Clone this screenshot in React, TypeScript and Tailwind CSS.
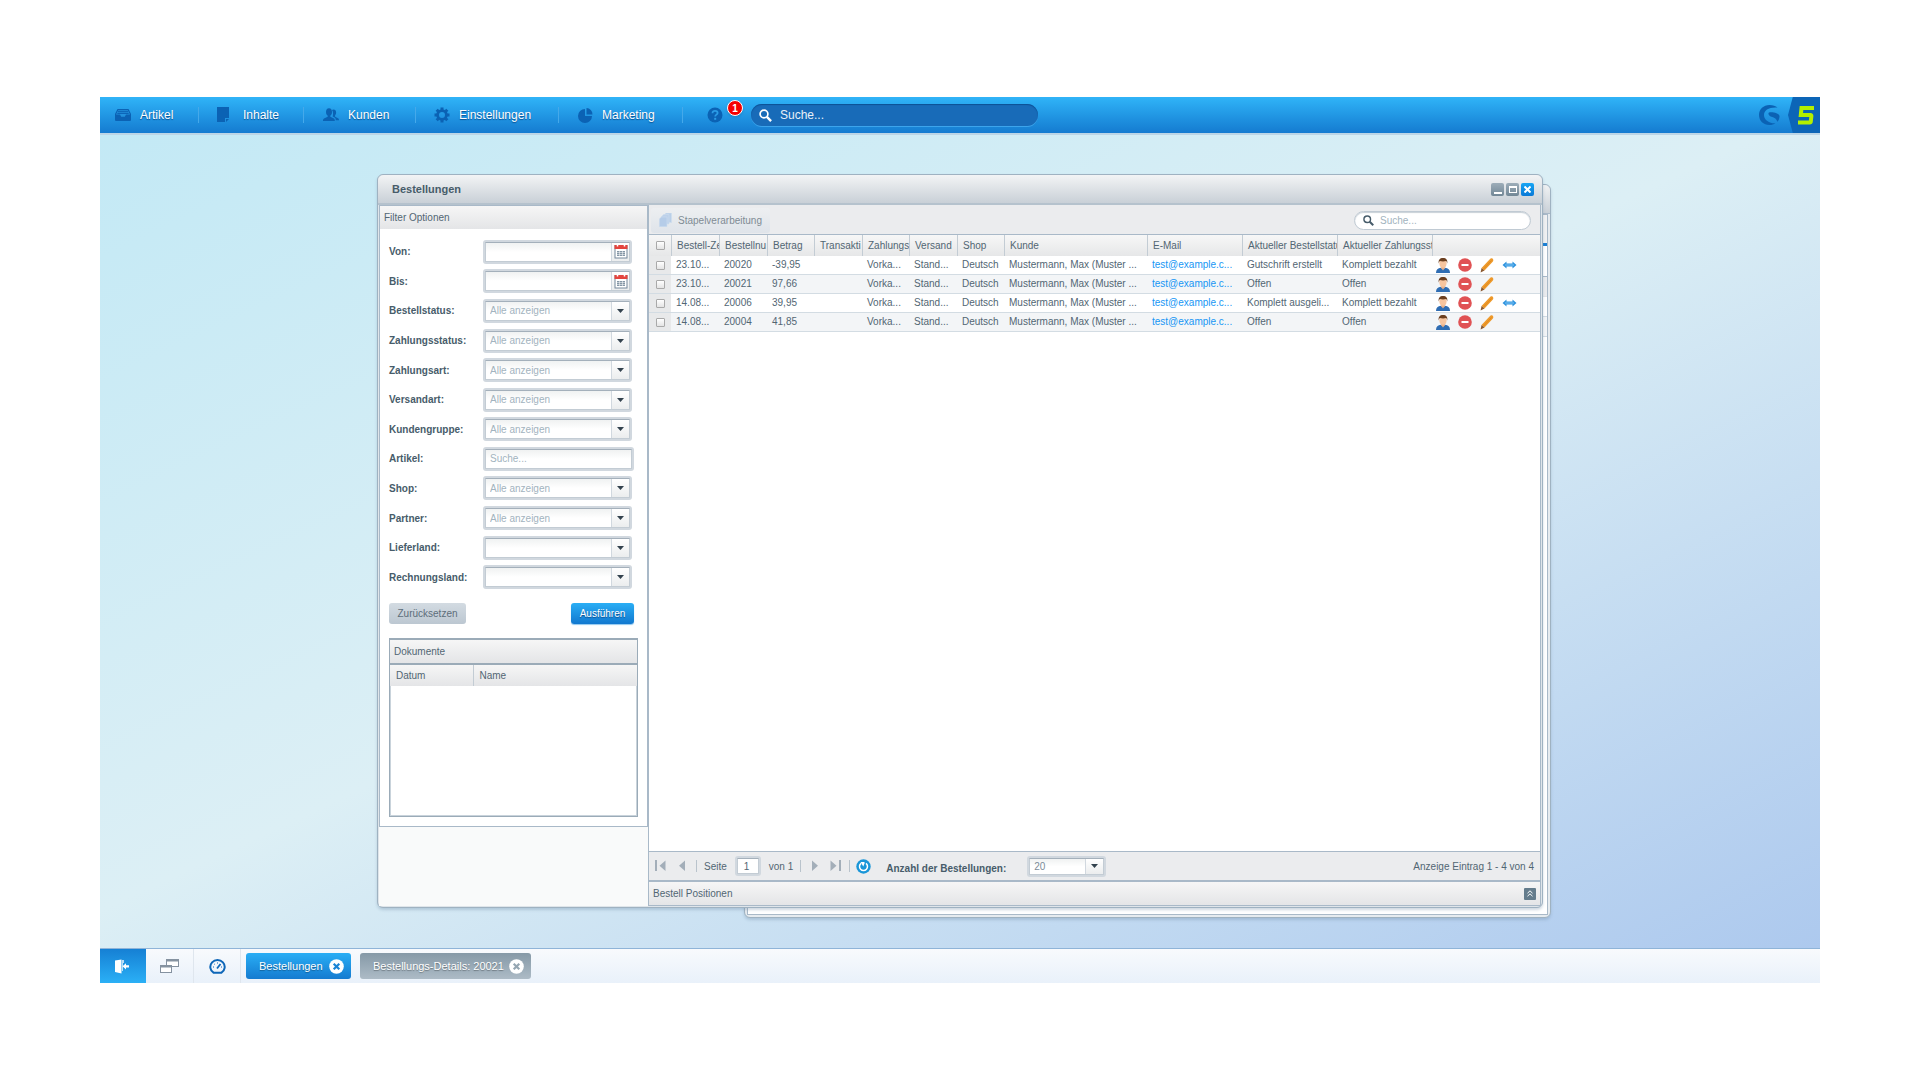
import React from "react";

const FIELDS: { label: string; kind: "date" | "select" | "text"; value: string }[] = [
  { label: "Von:", kind: "date", value: "" },
  { label: "Bis:", kind: "date", value: "" },
  { label: "Bestellstatus:", kind: "select", value: "Alle anzeigen" },
  { label: "Zahlungsstatus:", kind: "select", value: "Alle anzeigen" },
  { label: "Zahlungsart:", kind: "select", value: "Alle anzeigen" },
  { label: "Versandart:", kind: "select", value: "Alle anzeigen" },
  { label: "Kundengruppe:", kind: "select", value: "Alle anzeigen" },
  { label: "Artikel:", kind: "text", value: "Suche..." },
  { label: "Shop:", kind: "select", value: "Alle anzeigen" },
  { label: "Partner:", kind: "select", value: "Alle anzeigen" },
  { label: "Lieferland:", kind: "select", value: "" },
  { label: "Rechnungsland:", kind: "select", value: "" },
];

const COLUMNS = [
  "Bestell-Ze",
  "Bestellnu",
  "Betrag",
  "Transakti",
  "Zahlungs",
  "Versand",
  "Shop",
  "Kunde",
  "E-Mail",
  "Aktueller Bestellstatu",
  "Aktueller Zahlungsst",
];

const ORDERS = [
  { date: "23.10...", no: "20020", sum: "-39,95", status: "Gutschrift erstellt", pay: "Komplett bezahlt", link: true },
  { date: "23.10...", no: "20021", sum: "97,66", status: "Offen", pay: "Offen", link: false },
  { date: "14.08...", no: "20006", sum: "39,95", status: "Komplett ausgeli...", pay: "Komplett bezahlt", link: true },
  { date: "14.08...", no: "20004", sum: "41,85", status: "Offen", pay: "Offen", link: false },
];

/* ---------- icons ---------- */

const InboxIcon = () => (
  <svg width="16" height="12" viewBox="0 0 16 12">
    <path d="M2.500 0h11L16 5v6a1 1 0 0 1-1 1H1a1 1 0 0 1-1-1V5z" fill="#0b62b4" />
    <path d="M1 5.500L3.200 1.200h9.600L15 5.500h-4L9.800 7.800H6.200L5 5.500z" fill="#2391dd" />
    <path d="M3 2.700h10M2.300 4.400h11.400" stroke="#0b62b4" />
  </svg>
);
const PageIcon = () => (
  <svg width="13" height="16" viewBox="0 0 13 16">
    <path d="M0 0h12v11H8v4H0z" fill="#0b62b4" />
    <path d="M9 12h3l-3 3z" fill="#0b62b4" />
  </svg>
);
const UsersIcon = () => (
  <svg width="16" height="14" viewBox="0 0 16 14" fill="#0b62b4">
    <ellipse cx="6" cy="4" rx="3" ry="3.800" />
    <path d="M4.700 6.500h2.600v2.300L11 10.500c.6.400.8 1.200.8 2.500H0c0-1.300.2-2.100 1-2.500l3.700-1.700z" />
    <path d="M10.500 1.500c1.700 0 2.600 1.200 2.600 3 0 1.400-.5 2.300-1 2.800v1.500l2.900 1.400c.7.400 1 1 1 2h-3.200c0-1.300-.4-2.200-1.200-2.600L9.700 8.400C10.200 7 10.300 4 9 2.100c.4-.4.9-.6 1.500-.6z" />
  </svg>
);
const GearIcon = () => (
  <svg width="16" height="16" viewBox="0 0 16 16" fill="none" stroke="#0b62b4">
    <circle cx="8" cy="8" r="4.400" strokeWidth="2.800" />
    <path d="M8 .5v3M8 12.500v3M.5 8h3M12.500 8h3M2.700 2.700l2 2M11.300 11.300l2 2M2.700 13.300l2-2M11.300 4.700l2-2" strokeWidth="3" />
  </svg>
);
const PieIcon = () => (
  <svg width="15" height="15" viewBox="0 0 15 15" fill="#0b62b4">
    <path d="M7 1v7h7A7 7 0 1 1 7 1z" />
    <path d="M8.500 0a6.500 6.500 0 0 1 6 6.500h-6z" />
  </svg>
);
const HelpIcon = () => (
  <svg width="16" height="16" viewBox="0 0 16 16">
    <circle cx="8" cy="8" r="7.500" fill="#0b62b4" />
    <path d="M5.500 6.200C5.500 4.600 6.600 3.800 8 3.800s2.600.8 2.600 2.200C10.600 7.600 8.200 7.700 8.200 9.500" stroke="#2b9ce6" strokeWidth="1.800" fill="none" />
    <rect x="7.200" y="10.800" width="2" height="2" fill="#2b9ce6" />
  </svg>
);
const SearchIcon = ({ color, size }: { color: string; size: number }) => (
  <svg width={size} height={size} viewBox="0 0 13 13" fill="none" stroke={color} className="shrink-0">
    <circle cx="5" cy="5" r="3.900" strokeWidth="1.700" />
    <path d="M7.900 7.900l4.200 4.200" strokeWidth="2.400" />
  </svg>
);
const ShopwareIcon = () => (
  <svg width="21" height="20" viewBox="0 0 21 20">
    <path d="M18.500 2.600C16.600 1 14 0 10.500 0 4.600 0 0 4.300 0 10s4.500 10 10.300 10c2.700 0 4.600-.7 6-1.800-5.300.3-11.300-2.800-11.300-8 0-5 5-8.200 13.500-7.600z" fill="#0b62b4" />
    <path d="M10 7.500c4.500-.6 9.500 1 10.500 3.200.2 2.600-.8 4.700-2.200 6-.5-2.800-2.800-4.300-5.800-5C10.300 11.200 8.500 8.500 10 7.500z" fill="#0b62b4" />
  </svg>
);
const FiveIcon = () => (
  <svg width="18" height="19" viewBox="0 0 18 19" fill="none" stroke="#b4f000" strokeWidth="4">
    <path d="M17 2H4.500l-.7 7H13.500q1 0 .9 1l-.6 5.500q-.1 1-1.100 1H1" />
  </svg>
);
const CalendarIcon = () => (
  <svg width="14" height="15" viewBox="0 0 14 15">
    <rect x="1" y="1.500" width="12" height="12.500" fill="#fff" stroke="#74879a" />
    <path d="M.5 1h13v4H.5z" fill="#e4443e" />
    <path d="M3.500 0v2.500M10.500 0v2.500" stroke="#fff" strokeWidth="1.500" />
    <rect x="3" y="7" width="8" height="5" fill="#8496a5" />
    <path d="M3 8.500h8M3 10.500h8M5.500 7v5M8.500 7v5" stroke="#fff" strokeWidth=".5" />
  </svg>
);
const Caret = () => (
  <svg width="7" height="4" viewBox="0 0 7 4">
    <path d="M0 0h7L3.500 4z" fill="#33424e" />
  </svg>
);
const StackIcon = () => (
  <svg width="13" height="14" viewBox="0 0 13 14" fill="#b9cfe8" stroke="#cfdeef" strokeWidth=".6">
    <path d="M5 2l2-2h5.500v9.500H5z" />
    <path d="M2.500 3.500l2-2H10V11H2.500z" fill="#bdd1ea" />
    <path d="M.3 6l2-2H8v9.700H.3z" fill="#b5cce8" />
  </svg>
);
const UserIcon = () => (
  <svg width="14" height="15" viewBox="0 0 14 15">
    <path d="M0 15c0-3.500 1.800-5 5-5.300h4c3.200.3 5 1.800 5 5.300z" fill="#2f6db3" />
    <path d="M5.200 8h3.600v2.200L7 12.500l-1.800-2.300z" fill="#eab088" />
    <ellipse cx="7" cy="5.500" rx="3.600" ry="4.200" fill="#f7c59f" />
    <path d="M2.800 5.500C2 2 3.900 0 7 0s5 2 4.200 5.500c-.2-1.500-.7-2.200-1.200-2.500-1.700.5-4.300.5-6 0-.5.300-1 1-1.200 2.500z" fill="#6b3f1f" />
  </svg>
);
const DeleteIcon = () => (
  <svg width="14" height="14" viewBox="0 0 14 14">
    <circle cx="7" cy="7" r="6.800" fill="#e05254" />
    <rect x="3.500" y="6" width="7" height="2" fill="#fff" />
  </svg>
);
const PencilIcon = () => (
  <svg width="14" height="15" viewBox="0 0 14 15">
    <path d="M1.500 10L9.800 1.200c.8-1 2-1.200 2.900-.4.900.8.800 2 0 2.900L4.500 12.600z" fill="#ee9a2c" />
    <path d="M3 11.500L11.500 2.500" stroke="#e08b20" strokeWidth="1" />
    <path d="M1.500 10l3 2.600L.6 14.600z" fill="#8a5a33" />
  </svg>
);
const ArrowsIcon = () => (
  <svg width="15" height="8" viewBox="0 0 15 8">
    <path d="M.5 4L4.500.5v2h6v-2l4 3.500-4 3.500v-2h-6v2z" fill="#2f93de" />
    <path d="M3 4h9" stroke="#7cc4f5" />
  </svg>
);
const RefreshIcon = () => (
  <svg width="15" height="15" viewBox="0 0 15 15">
    <circle cx="7.500" cy="7.500" r="7.200" fill="#1a96d8" />
    <path d="M5 4.300a4 4 0 1 0 5 0" fill="none" stroke="#fff" strokeWidth="1.500" />
    <path d="M4.500 3h4v1.200L7.300 7.500z" fill="#fff" />
  </svg>
);
const CircleClose = ({ color }: { color: string }) => (
  <svg width="15" height="15" viewBox="0 0 15 15">
    <circle cx="7.500" cy="7.500" r="7.300" fill="#fff" />
    <path d="M4.700 4.700l5.600 5.600M10.300 4.700l-5.600 5.600" stroke={color} strokeWidth="2.200" />
  </svg>
);
const DoorIcon = () => (
  <svg width="14" height="15" viewBox="0 0 14 15" fill="#fff">
    <path d="M0 1.500L6.500.5v14L0 13z" />
    <path d="M7 1h2v3H8v8H7z" opacity=".7" />
    <path d="M7.500 7.300L11 4.200v2h3v2.300h-3v2z" />
  </svg>
);
const WindowsIcon = () => (
  <svg width="19" height="14" viewBox="0 0 19 14" fill="#fff" stroke="#8592a0">
    <rect x="6.500" y=".5" width="12" height="7" />
    <path d="M6 1.500h13" strokeWidth="2" />
    <rect x=".5" y="6.500" width="11" height="7" />
    <path d="M0 7.500h12" strokeWidth="2" />
  </svg>
);
const GaugeIcon = () => (
  <svg width="17" height="15" viewBox="0 0 17 15" fill="none" stroke="#0d66b8">
    <path d="M4.500 13.700a7.200 6.900 0 1 1 8 0z" strokeWidth="2" />
    <path d="M8 9.500L11.500 5" strokeWidth="1.800" />
    <path d="M4 8h1M8.500 3.500v1M5.300 5l.7.700M12 8h1" strokeWidth="1" />
  </svg>
);
const PageArrow = ({ flip, bar }: { flip?: boolean; bar?: boolean }) => (
  <svg width="11" height="12" viewBox="0 0 11 12" fill="#a3aeb9" className={flip ? "-scale-x-100" : ""}>
    {bar && <rect x="0" y="0" width="2" height="11" />}
    <path d={bar ? "M10.500 .5v10.500L4.500 5.800z" : "M8 .5v10.500L2 5.800z"} />
  </svg>
);

/* ---------- parts ---------- */

const MENU = [
  { label: "Artikel", icon: <InboxIcon />, cls: "w-[99px] pl-[15px] gap-2" },
  { label: "Inhalte", icon: <PageIcon />, cls: "w-[105px] pl-[18px] gap-3" },
  { label: "Kunden", icon: <UsersIcon />, cls: "w-[112px] pl-[19px] gap-2" },
  { label: "Einstellungen", icon: <GearIcon />, cls: "w-[143px] pl-[18px] gap-2" },
  { label: "Marketing", icon: <PieIcon />, cls: "w-[124px] pl-[19px] gap-2" },
];

function MenuBar() {
  return (
    <header className="flex h-9 shrink-0 items-stretch bg-linear-to-b from-[#30b4f8] to-[#157bd0]">
      <nav className="flex items-center">
        {MENU.map((m) => (
          <button
            key={m.label}
            className={
              "flex h-4 items-center border-r border-[#45a9ea] text-xs text-white [text-shadow:0_1px_1px_#0b4f8f] " + m.cls
            }
          >
            {m.icon}
            <span className="pl-px">{m.label}</span>
          </button>
        ))}
        <button aria-label="Hilfe" className="relative ml-6 h-4 w-4">
          <HelpIcon />
          <span className="absolute -top-[7px] left-5 flex h-4 w-4 items-center justify-center rounded-full border border-white bg-[#f50000] text-[10px] font-bold text-white shadow">
            1
          </span>
        </button>
      </nav>
      <label className="ml-7 flex h-[22px] w-[287px] items-center gap-2 self-center rounded-full bg-[#186bb8] pl-2 shadow-[inset_0_1px_1px_#0c5195,0_1px_0_#3ca4ec]">
        <SearchIcon color="#fff" size={13} />
        <input aria-label="Suche" placeholder="Suche..." className="w-full bg-transparent text-xs text-white outline-none placeholder:text-white placeholder:opacity-90" />
      </label>
      <div className="ml-auto flex items-center gap-2">
        <ShopwareIcon />
        <div className="flex h-9 w-8 items-center justify-center bg-[#0c65b7] pl-1 [clip-path:polygon(0_50%,15%_0,100%_0,100%_100%,15%_100%)]">
          <FiveIcon />
        </div>
      </div>
    </header>
  );
}

const FIELD_OUTER = "flex h-6 rounded-[3px] bg-[#d1d8df] p-0.5";
const FIELD_INNER =
  "relative flex w-full items-stretch border border-[#c3ccd4] border-t-[#a4b0bb] bg-linear-to-b from-[#f0f2f2] to-white to-50%";
const TRIGGER = "flex w-[18px] shrink-0 items-center justify-center border-l border-[#d1d8df] bg-linear-to-b from-white to-[#ebedee]";

function FilterField({ field }: { field: (typeof FIELDS)[number] }) {
  const id = "filter-" + field.label.replace(":", "").toLowerCase();
  const outer = FIELD_OUTER + (field.kind === "text" ? " w-[151px]" : " w-[149px]");
  return (
    <div className="flex items-center">
      <label htmlFor={id} className="w-[94px] shrink-0 font-bold text-[#475c6a]">
        {field.label}
      </label>
      <div className={outer}>
        <div className={FIELD_INNER}>
          {field.kind === "select" ? (
            <>
              <select id={id} className="w-full appearance-none bg-transparent pl-1 text-[#a2b3be] outline-none">
                <option>{field.value}</option>
              </select>
              <span className={"pointer-events-none absolute inset-y-0 right-0 " + TRIGGER}>
                <Caret />
              </span>
            </>
          ) : (
            <input id={id} placeholder={field.value} className="w-full min-w-0 bg-transparent pl-1 outline-none placeholder:text-[#a2b3be]" />
          )}
          {field.kind === "date" && (
            <button aria-label="Kalender" className={TRIGGER}>
              <CalendarIcon />
            </button>
          )}
        </div>
      </div>
    </div>
  );
}

const Bar = ({ className, children }: { className: string; children: React.ReactNode }) => (
  <div className={"flex items-center bg-linear-to-b from-[#f6f6f6] to-[#e4e5e7] " + className}>{children}</div>
);

function FilterPanel() {
  return (
    <aside className="flex w-[269px] shrink-0 flex-col bg-[#f9fafa]">
      <div className="border-x border-b border-[#a9b9c8] bg-white pb-[9px]">
        <Bar className="h-6 border-t border-[#a9b9c8] pl-1">Filter Optionen</Bar>
        <form className="px-[9px] pt-2" onSubmit={(e) => e.preventDefault()}>
          <div className="grid h-[355px] grid-rows-12">
            {FIELDS.map((f) => (
              <FilterField key={f.label} field={f} />
            ))}
          </div>
          <div className="mt-[11px] mr-1 flex justify-between">
            <button type="button" className="h-[21px] w-[77px] rounded-[3px] bg-linear-to-b from-[#d3dbe2] to-[#bcc7d1] text-[#5d6d7a]">
              Zurücksetzen
            </button>
            <button className="h-[21px] w-[63px] rounded-[3px] bg-linear-to-b from-[#2aaef5] to-[#1278cf] text-white shadow-[0_1px_1px_#8fc8f0] [text-shadow:0_1px_1px_#0b4f8f]">
              Ausführen
            </button>
          </div>
        </form>
        <section className="mx-[9px] mt-[14px] h-[179px] border border-t-2 border-[#9babb8] bg-white shadow-[inset_0_0_0_1px_#c9d3db]">
          <Bar className="h-[25px] border-b-2 border-[#9babb8] pl-1">Dokumente</Bar>
          <table className="w-full table-fixed text-left">
            <thead>
              <tr className="h-[21px] bg-linear-to-b from-[#f6f6f6] to-[#e4e5e7]">
                <th className="w-[83px] border-r border-[#c3ccd4] pl-1.5 font-normal">Datum</th>
                <th className="pl-1.5 font-normal">Name</th>
              </tr>
            </thead>
          </table>
        </section>
      </div>
    </aside>
  );
}

const Check = ({ label }: { label: string }) => (
  <input
    type="checkbox"
    aria-label={label}
    className="mx-auto block h-[9px] w-[9px] appearance-none rounded-[1px] border border-[#a9a9a9] bg-linear-to-b from-white to-[#e4e4e4]"
  />
);

function OrderTable() {
  const cell = "overflow-hidden whitespace-nowrap pl-[5px]";
  return (
    <table className="w-full table-fixed border-separate border-spacing-0 text-left leading-3">
      <colgroup>
        <col className="w-[22px]" />
        <col className="w-12" />
        <col className="w-12" />
        <col className="w-[47px]" />
        <col className="w-12" />
        <col className="w-[47px]" />
        <col className="w-12" />
        <col className="w-[47px]" />
        <col className="w-[143px]" />
        <col className="w-[95px]" />
        <col className="w-[95px]" />
        <col className="w-[95px]" />
        <col />
      </colgroup>
      <thead>
        <tr className="h-[21px] bg-linear-to-b from-[#f7f7f7] to-[#e6e7e8]">
          <th>
            <Check label="Alle auswählen" />
          </th>
          {COLUMNS.map((c) => (
            <th key={c} className="overflow-hidden border-l border-[#c3ccd4] pl-[5px] font-normal whitespace-nowrap">
              {c}
            </th>
          ))}
          <th className="border-l border-[#c3ccd4]" aria-label="Aktionen" />
        </tr>
      </thead>
      <tbody>
        {ORDERS.map((o) => (
          <tr key={o.no} className="h-[19px] even:bg-[#f3f5f7] [&>td]:border-b [&>td]:border-[#d3dce3]">
            <td className="bg-[#e8e9ea]">
              <Check label={"Bestellung " + o.no} />
            </td>
            <td className={cell}>{o.date}</td>
            <td className={cell}>{o.no}</td>
            <td className={cell}>{o.sum}</td>
            <td />
            <td className={cell}>Vorka...</td>
            <td className={cell}>Stand...</td>
            <td className={cell}>Deutsch</td>
            <td className={cell}>Mustermann, Max (Muster ...</td>
            <td className={cell}>
              <a href="#mail" className="text-[#1596f5]">
                test@example.c...
              </a>
            </td>
            <td className={cell}>{o.status}</td>
            <td className={cell}>{o.pay}</td>
            <td>
              <div className="flex h-4 items-center gap-2 pl-1">
                <button aria-label="Kunde öffnen"><UserIcon /></button>
                <button aria-label="Löschen"><DeleteIcon /></button>
                <button aria-label="Bearbeiten"><PencilIcon /></button>
                {o.link && <button aria-label="Verknüpfung"><ArrowsIcon /></button>}
              </div>
            </td>
          </tr>
        ))}
      </tbody>
    </table>
  );
}

const Divider = () => <span className="h-3 w-px bg-[#b9c3cc]" />;

function Pager() {
  return (
    <footer className="flex h-[29px] shrink-0 items-center border-t border-[#a9b9c8] bg-[#ebecee]">
      <div className="flex items-center">
        <button aria-label="Erste Seite" className="ml-[6px]"><PageArrow bar /></button>
        <button aria-label="Vorherige Seite" className="mr-2 ml-[11px]"><PageArrow /></button>
        <Divider />
        <label htmlFor="page" className="ml-[7px]">Seite</label>
        <span className="mx-2 flex h-5 w-[26px] rounded-[3px] bg-[#d1d8df] p-0.5">
          <input id="page" defaultValue="1" className="w-full min-w-0 border border-[#c3ccd4] border-t-[#a4b0bb] bg-white pl-1.5 outline-none" />
        </span>
        <span className="mr-[7px]">von 1</span>
        <Divider />
        <button aria-label="Nächste Seite" className="ml-2"><PageArrow flip /></button>
        <button aria-label="Letzte Seite" className="mr-2 ml-[10px]"><PageArrow flip bar /></button>
        <Divider />
        <button aria-label="Aktualisieren" className="ml-[6px]"><RefreshIcon /></button>
      </div>
      <label htmlFor="count" className="ml-[15px] w-[141px] pt-[5px] font-bold text-[#475c6a]">
        Anzahl der Bestellungen:
      </label>
      <div className="flex h-[21px] w-[79px] rounded-[3px] bg-[#d1d8df] p-0.5">
        <div className={FIELD_INNER}>
          <select id="count" className="w-full appearance-none bg-transparent pl-1 text-[#7b8c99] outline-none">
            <option>20</option>
          </select>
          <span className={"pointer-events-none absolute inset-y-0 right-0 " + TRIGGER}>
            <Caret />
          </span>
        </div>
      </div>
      <span className="mr-[6px] ml-auto">Anzeige Eintrag 1 - 4 von 4</span>
    </footer>
  );
}

function OrdersWindow() {
  return (
    <main className="absolute top-[39px] left-[277px] flex h-[734px] w-[1166px] flex-col rounded-md border border-[#9fb2c1] bg-[#dfe5ea] text-[10px] text-[#526673] shadow-[0_2px_3px_#6f8ba455]">
      <div className="flex h-[30px] shrink-0 items-center justify-between rounded-t-md border-b-2 border-[#b5c2cd] bg-linear-to-b from-[#f3f4f5] to-[#c9d0d7] pr-2 pl-[14px]">
        <h1 className="text-[11px] font-bold text-[#475c6a]">Bestellungen</h1>
        <div className="flex gap-0.5">
          <button aria-label="Minimieren" className="flex h-[13px] w-[13px] items-end justify-center rounded-[2px] bg-linear-to-b from-[#9dadb9] to-[#728796] pb-0.5">
            <span className="h-0.5 w-2 bg-white" />
          </button>
          <button aria-label="Maximieren" className="flex h-[13px] w-[13px] items-center justify-center rounded-[2px] bg-linear-to-b from-[#9dadb9] to-[#728796]">
            <span className="h-[7px] w-2 border border-t-2 border-white" />
          </button>
          <button aria-label="Schließen" className="flex h-[13px] w-[13px] items-center justify-center rounded-[2px] bg-linear-to-b from-[#18a5f4] to-[#0a78d6]">
            <svg width="7" height="7" viewBox="0 0 7 7" stroke="#fff" strokeWidth="2">
              <path d="M.5 .5l6 6M6.500 .5l-6 6" />
            </svg>
          </button>
        </div>
      </div>
      <div className="flex min-h-0 flex-1 px-px pb-px">
        <FilterPanel />
        <div className="flex min-w-0 flex-1 flex-col border-x border-b border-[#a9b9c8] bg-white">
          <div className="flex h-[30px] shrink-0 items-center justify-between border-b border-[#a9b9c8] bg-[#ebecee] pt-px pr-[9px] pl-0.5">
            <button disabled className="flex h-[25px] w-[119px] items-center gap-1.5 rounded-[3px] bg-linear-to-b from-[#edeff1] to-[#dfe4ea] pl-2 text-[#7f8b94]">
              <StackIcon />
              Stapelverarbeitung
            </button>
            <label className="flex h-[19px] w-[177px] items-center gap-1.5 rounded-full border border-[#c0cad3] bg-white pl-2 shadow-[inset_0_1px_1px_#c9d1d8]">
              <SearchIcon color="#475c6a" size={11} />
              <input aria-label="Bestellungen suchen" placeholder="Suche..." className="w-full bg-transparent outline-none placeholder:text-[#a2b3be]" />
            </label>
          </div>
          <div className="min-h-0 flex-1">
            <OrderTable />
          </div>
          <Pager />
          <Bar className="h-[25px] shrink-0 justify-between border-t-2 border-[#a9b9c8] pr-1 pl-1">
            <h2>Bestell Positionen</h2>
            <button aria-label="Aufklappen" className="flex h-3 w-3 items-center justify-center rounded-[1px] bg-[#647c8c]">
              <svg width="6" height="7" viewBox="0 0 6 7" fill="none" stroke="#fff">
                <path d="M.5 3.200L3 .8l2.500 2.400M.5 6.200L3 3.800l2.500 2.400" />
              </svg>
            </button>
          </Bar>
        </div>
      </div>
    </main>
  );
}

function DetailsWindow() {
  return (
    <div className="absolute top-[49px] left-[644px] flex h-[734px] w-[807px] flex-col rounded-md border border-[#9fb2c1] bg-[#e6ebef] shadow-[0_2px_3px_#6f8ba455]">
      <div className="h-[29px] rounded-t-md border-b border-[#a9b9c8] bg-linear-to-b from-[#f0f2f3] to-[#c9d0d7]" />
      <div className="mx-0.5 mb-0.5 flex-1 border border-[#a9b9c8] bg-white">
        <div className="h-[31px] border-b-[3px] border-[#1a7fd4] bg-[#f0f1f2]" />
        <div className="h-[31px] border-b border-[#a9b9c8]" />
        <div className="h-5 border-b border-[#e4e5e7] bg-[#ebecee]" />
        <div className="h-5 border-b border-[#d3dce3]" />
        <div className="h-5 border-b border-[#d3dce3] bg-[#f3f5f7]" />
      </div>
    </div>
  );
}

function TaskBar() {
  const tab = "flex h-[26px] items-center justify-between rounded-[3px] pr-[7px] pl-[13px] text-[11px] [text-shadow:0_1px_1px_#00000055]";
  return (
    <footer className="flex h-[35px] shrink-0 items-center border-t border-[#8fb4d8] bg-linear-to-b from-[#f8fafd] to-[#e9f1fa]">
      <button aria-label="Abmelden" className="flex h-full w-[46px] items-center justify-center bg-linear-to-b from-[#1680d4] to-[#2bb0f6] pr-0.5">
        <DoorIcon />
      </button>
      <button aria-label="Fenster" className="flex h-full w-12 items-center justify-center border-r border-[#dfe6ee]">
        <WindowsIcon />
      </button>
      <button aria-label="Übersicht" className="flex h-full w-[47px] items-center justify-center border-r border-[#dfe6ee]">
        <GaugeIcon />
      </button>
      <button className={"ml-[5px] w-[105px] bg-linear-to-b from-[#2aaef5] to-[#157bd0] text-white " + tab}>
        <span>Bestellungen</span>
        <CircleClose color="#1a84d6" />
      </button>
      <button className={"ml-[9px] w-[171px] bg-linear-to-b from-[#8599a7] to-[#adbbc6] text-white " + tab}>
        <span>Bestellungs-Details: 20021</span>
        <CircleClose color="#95a6b2" />
      </button>
    </footer>
  );
}

export default function App() {
  return (
    <div className="flex min-h-screen flex-col bg-white px-[100px] py-[97px] font-['Liberation_Sans',Arial,sans-serif]">
      <MenuBar />
      <div className="relative min-h-[815px] flex-1 overflow-hidden border-t-2 border-[#bcd5e6] bg-[linear-gradient(155deg,#c3e9f5_0%,#dceff5_48%,#adc9ee_100%)]">
        <DetailsWindow />
        <OrdersWindow />
      </div>
      <TaskBar />
    </div>
  );
}
